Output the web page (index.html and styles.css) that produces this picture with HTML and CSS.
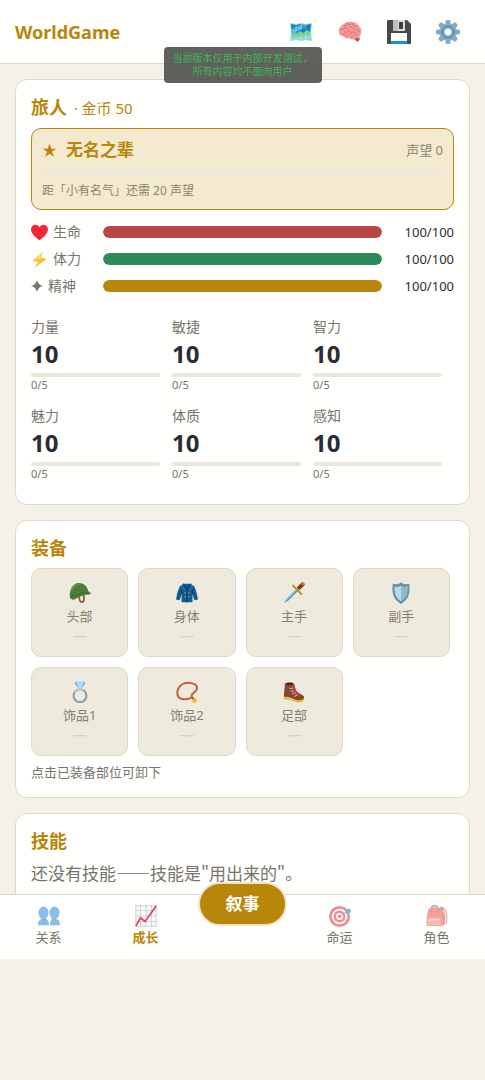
FILE: index.html
```html
<!DOCTYPE html>
<html lang="zh-CN">
<head>
    <meta charset="UTF-8">
    <meta name="viewport" content="width=device-width, initial-scale=1.0">
    <title>WorldGame</title>
    <link rel="stylesheet" href="styles.css">
</head>
<body>
    <header class="topbar">
        <h1 class="logo">WorldGame</h1>
        <div class="tools">
            <button type="button" class="tool" aria-label="地图">
                <svg viewBox="0 0 24 24">
                    <path d="M1 3l6 1 5-1 5 1 6-1-1 8 1 10-6-1-5 1-5-1-6 1 1-9z" fill="#8fd8f0"/>
                    <path d="M2 4l5 1 5-1 5 1 5-1-1 8-4-1-3 2-4-1-3 3-4-2z" fill="#1976d2"/>
                    <path d="M2 10l4-3 4-1 3-2 4 1-2 3-4 2-3 1-2 3-4-1z" fill="#4fc3f7"/>
                    <path d="M3 13l4 1 3-3 4 2 4-3 3 2v4l-4-1-3 2-4-1-3 2-4-1z" fill="#7ed17a"/>
                    <path d="M13 5l4 1-1 3-3-1zM4 6l3 1-2 3z" fill="#35a853"/>
                    <path d="M7 4v16M12 3v18M17 4v16" stroke="#fff" stroke-opacity=".35" stroke-width=".7"/>
                </svg>
            </button>
            <button type="button" class="tool" aria-label="记忆">
                <svg viewBox="0 0 24 24">
                    <path d="M15 17l5-1 2 3-2 3-3-2z" fill="#c4565f"/>
                    <path d="M1 13C0 9 2 6 5 5c2-3 6-4 9-3 3 0 5 1 6 3 3 2 4 5 3 8 0 3-2 5-5 5-2 2-5 2-7 0-3 1-5 0-6-2-2 0-4-1-4-3z" fill="#f89a9c"/>
                    <path d="M5 5c1 1 3 1 4 0M9 3c1 2 3 2 4 1M2 10c2-2 4-1 5 1M6 8c2-1 4 0 4 2M11 7c2-1 4 0 5 2M15 4c0 2 2 3 4 2M18 9c2 0 3 1 3 3M4 14c2 1 4 0 4-2M10 12c2-1 4 0 4 2M8 16c2 0 3-1 4-2M15 12c2 0 4 1 4 3M13 17c1 0 3-1 3-2" fill="none" stroke="#dc686e" stroke-width="1" stroke-linecap="round"/>
                </svg>
            </button>
            <button type="button" class="tool" aria-label="存档">
                <svg viewBox="0 0 24 24">
                    <path d="M1 0h19l4 4v19a1 1 0 0 1-1 1H1a1 1 0 0 1-1-1V1a1 1 0 0 1 1-1z" fill="#484848"/>
                    <path d="M6 0h12v11H6z" fill="#dcdcdc"/>
                    <path d="M6 0h5v11H6z" fill="#bdbdbd"/>
                    <path d="M12 2h4v7h-4z" fill="#3c3c3c"/>
                    <path d="M4 13h16v11H4z" fill="#fff"/>
                    <path d="M4 21h16v3H4z" fill="#1e90d8"/>
                </svg>
            </button>
            <button type="button" class="tool" aria-label="设置">
                <svg viewBox="0 0 24 24">
                    <g fill="#82aec0">
                        <path d="M10 0h4l1 5H9zM10 24h4l1-5H9z"/>
                        <path d="M10 0h4l1 5H9zM10 24h4l1-5H9z" transform="rotate(45 12 12)"/>
                        <path d="M10 0h4l1 5H9zM10 24h4l1-5H9z" transform="rotate(90 12 12)"/>
                        <path d="M10 0h4l1 5H9zM10 24h4l1-5H9z" transform="rotate(135 12 12)"/>
                    </g>
                    <circle cx="12" cy="12" r="6.3" fill="none" stroke="#82aec0" stroke-width="4.5"/>
                    <circle cx="12" cy="12" r="5.5" fill="none" stroke="#5c8ea5" stroke-width="2"/>
                    <circle cx="12" cy="12" r="3.6" fill="#fff" stroke="#a9c8d5" stroke-width="1.5"/>
                </svg>
            </button>
        </div>
    </header>

    <div class="notice">当前版本仅用于内部开发测试，<br>所有内容均不面向用户</div>

    <main class="content">
        <section class="card">
            <h2 class="card-title">旅人 <span class="gold-count">· 金币 50</span></h2>

            <div class="fame">
                <div class="fame-head">
                    <svg class="star" viewBox="0 0 24 24"><path d="M12 1l3 8h8l-7 5 3 8-7-5-7 5 3-8-7-5h8z" fill="#b8860b"/></svg>
                    <strong class="fame-name">无名之辈</strong>
                    <span class="fame-value">声望 0</span>
                </div>
                <div class="fame-bar"></div>
                <p class="fame-next">距「小有名气」还需 20 声望</p>
            </div>

            <div class="vitals">
                <div class="vital">
                    <span class="vital-label">
                        <svg class="vital-icon" viewBox="0 0 24 24"><path d="M12 23C5 18 0 13 0 7.5 0 3.5 3 1 6.300 1 9 1 11 2.500 12 5c1-2.500 3-4 5.700-4C21 1 24 3.500 24 7.500 24 13 19 18 12 23z" fill="#fa2530"/></svg>
                        生命
                    </span>
                    <div class="bar"><div class="bar-fill hp"></div></div>
                    <span class="vital-value">100/100</span>
                </div>
                <div class="vital">
                    <span class="vital-label">
                        <svg class="vital-icon" viewBox="0 0 24 24"><path d="M17 1L2 14l8 1-5 9 17-13-8-2z" fill="#fbc02d"/><path d="M17 1L6 11l7 1z" fill="#ffdc5c"/></svg>
                        体力
                    </span>
                    <div class="bar"><div class="bar-fill sp"></div></div>
                    <span class="vital-value">100/100</span>
                </div>
                <div class="vital">
                    <span class="vital-label">
                        <svg class="vital-icon small" viewBox="0 0 24 24"><path d="M12 0c2 7 5 10 12 12-7 2-10 5-12 12-2-7-5-10-12-12C7 10 10 7 12 0z" fill="#77746d"/></svg>
                        精神
                    </span>
                    <div class="bar"><div class="bar-fill mp"></div></div>
                    <span class="vital-value">100/100</span>
                </div>
            </div>

            <div class="attrs">
                <div class="attr"><div class="attr-name">力量</div><div class="attr-value">10</div><div class="attr-bar"></div><div class="attr-exp">0/5</div></div>
                <div class="attr"><div class="attr-name">敏捷</div><div class="attr-value">10</div><div class="attr-bar"></div><div class="attr-exp">0/5</div></div>
                <div class="attr"><div class="attr-name">智力</div><div class="attr-value">10</div><div class="attr-bar"></div><div class="attr-exp">0/5</div></div>
                <div class="attr"><div class="attr-name">魅力</div><div class="attr-value">10</div><div class="attr-bar"></div><div class="attr-exp">0/5</div></div>
                <div class="attr"><div class="attr-name">体质</div><div class="attr-value">10</div><div class="attr-bar"></div><div class="attr-exp">0/5</div></div>
                <div class="attr"><div class="attr-name">感知</div><div class="attr-value">10</div><div class="attr-bar"></div><div class="attr-exp">0/5</div></div>
            </div>
        </section>

        <section class="card">
            <h2 class="card-title">装备</h2>
            <div class="slots">
                <button type="button" class="slot">
                    <svg class="slot-icon" viewBox="0 0 24 24">
                        <path d="M11 14c0 5 1 8 3 8s3-3 2-8" fill="none" stroke="#8a5a4a" stroke-width="2"/>
                        <path d="M1 17C0 8 4 1 11 1c6 0 9 4 10 9l3 2c0 1-2 2-4 2-5 0-7 2-12 4l-2 1c-2 1-4 0-5-2z" fill="#4e7d3a"/>
                        <path d="M3 9c1-4 4-6 7-6" fill="none" stroke="#6d9b55" stroke-width="1.5" stroke-linecap="round"/>
                        <path d="M2 15c7 1 10-3 19-4" fill="none" stroke="#3a642b" stroke-width="1"/>
                    </svg>
                    <span class="slot-name">头部</span>
                    <span class="slot-item">—</span>
                </button>
                <button type="button" class="slot">
                    <svg class="slot-icon" viewBox="0 0 24 24">
                        <path d="M8 2h8l4 3c2 4 3 9 4 14l-4 1-2-7v9H6v-9l-2 7-4-1C1 14 2 9 4 5z" fill="#0f5c92"/>
                        <path d="M8 2l4 6 4-6M12 8v14M6 13V9M18 13V9" fill="none" stroke="#083c66" stroke-width="1.2"/>
                        <path d="M8 2l-2 4 4 3M16 2l2 4-4 3" fill="none" stroke="#2f80b8" stroke-width="1"/>
                        <g fill="#c9a84a"><circle cx="10" cy="12" r=".8"/><circle cx="14" cy="12" r=".8"/><circle cx="10" cy="16" r=".8"/><circle cx="14" cy="16" r=".8"/></g>
                    </svg>
                    <span class="slot-name">身体</span>
                    <span class="slot-item">—</span>
                </button>
                <button type="button" class="slot">
                    <svg class="slot-icon" viewBox="0 0 24 24">
                        <path d="M1 23l3-5L15 7l2 2L6 20z" fill="#7fc4e0"/>
                        <path d="M1 23L16 8l1 1L6 20z" fill="#4b9cc2"/>
                        <path d="M16 6l5-5 2 2-5 5z" fill="#7b3f24" stroke="#7b3f24" stroke-width="1.5"/>
                        <path d="M11 4l9 9" stroke="#c98d1d" stroke-width="2.2" stroke-linecap="round"/>
                        <circle cx="22" cy="2" r="1.8" fill="#c98d1d"/>
                    </svg>
                    <span class="slot-name">主手</span>
                    <span class="slot-item">—</span>
                </button>
                <button type="button" class="slot">
                    <svg class="slot-icon" viewBox="0 0 24 24">
                        <path d="M12 0c1 2 4 3 9 2 1 10 0 17-9 22C3 19 2 12 3 2c5 1 8 0 9-2z" fill="#6294af"/>
                        <path d="M12 4c2 1 4 2 7 1 0 8-1 12-7 16C6 17 5 13 5 5c3 1 5 0 7-1z" fill="#b9dcea"/>
                        <path d="M12 4c2 1 4 2 7 1 0 8-1 12-7 16z" fill="#93b9ca"/>
                    </svg>
                    <span class="slot-name">副手</span>
                    <span class="slot-item">—</span>
                </button>
                <button type="button" class="slot">
                    <svg class="slot-icon" viewBox="0 0 24 24">
                        <circle cx="12" cy="16" r="7" fill="none" stroke="#8e9a9b" stroke-width="2.2"/>
                        <path d="M6 12c2-3 7-4 10-2" fill="none" stroke="#d3dada" stroke-width="1.2"/>
                        <path d="M8 0h8l2 3-6 6-6-6z" fill="#75bdf0"/>
                        <path d="M8 0h8l-1 3H9zM9 3l3 6 3-6z" fill="#b9e1fb"/>
                    </svg>
                    <span class="slot-name">饰品1</span>
                    <span class="slot-item">—</span>
                </button>
                <button type="button" class="slot">
                    <svg class="slot-icon" viewBox="0 0 24 24">
                        <path d="M17 18c-5 3-13 3-15-2C0 10 4 2 13 2c6 0 10 2 10 6s-6 5-6 8c0 2 1 3 3 4" fill="none" stroke="#c8432f" stroke-width="2"/>
                        <path d="M17 18c-5 3-13 3-15-2C0 10 4 2 13 2c6 0 10 2 10 6s-6 5-6 8" fill="none" stroke="#ea8170" stroke-width="1" stroke-dasharray="1 1.5"/>
                        <path d="M17 20l5-1 1 4-4 1z" fill="#f3b81e"/>
                    </svg>
                    <span class="slot-name">饰品2</span>
                    <span class="slot-item">—</span>
                </button>
                <button type="button" class="slot">
                    <svg class="slot-icon" viewBox="0 0 24 24">
                        <path d="M1 17l8 3 6 1c4 0 7-1 8-3v3c-2 2-6 3-9 2l-5-2-8-1z" fill="#f3b41c"/>
                        <path d="M2 3c4 1 7 1 10 0l2 8c3 3 9 4 9 7 0 3-7 4-11 2l-5-2-6-1c0-5 1-9 1-14z" fill="#84492f"/>
                        <path d="M2 3c3-2 8-2 10 0-3 2-7 2-10 0z" fill="#3e2723"/>
                        <path d="M11 4l2 7 4 4" fill="none" stroke="#e22c3b" stroke-width="2.5"/>
                        <path d="M7 8l4 0M8 11l4 0M10 14l4-1M12 17l4-2" stroke="#d9c5b5" stroke-width="1"/>
                    </svg>
                    <span class="slot-name">足部</span>
                    <span class="slot-item">—</span>
                </button>
            </div>
            <p class="hint">点击已装备部位可卸下</p>
        </section>

        <section class="card">
            <h2 class="card-title">技能</h2>
            <p class="empty">还没有技能——技能是"用出来的"。</p>
        </section>
    </main>

    <nav class="tabs">
        <a href="#relation" class="tab">
            <svg class="tab-icon" viewBox="0 0 24 24">
                <path d="M0 22c0-4 1-6 5-7h2c4 1 5 3 5 7zM13 22c0-4 1-6 4-7h2c4 1 5 3 5 7z" fill="#3f93d2"/>
                <path d="M4 13h5v4H4zM15 13h5v4h-5z" fill="#3585c8"/>
                <ellipse cx="6" cy="8.5" rx="5.5" ry="6.8" fill="#3f93e2"/>
                <ellipse cx="18" cy="8.5" rx="5.5" ry="6.8" fill="#3f93e2"/>
            </svg>
            <span>关系</span>
        </a>
        <a href="#growth" class="tab active">
            <svg class="tab-icon" viewBox="0 0 24 24">
                <path d="M0 0h24v24H0z" fill="#fafafa"/>
                <path d="M1 0v24M6 0v24M12 0v24M18 0v24M23 0v24M0 1h24M0 6h24M0 12h24M0 18h24M0 23h24" stroke="#b3bdc0" stroke-width=".8"/>
                <path d="M1 23l5-9 5 4L23 1" fill="none" stroke="#d8213a" stroke-width="1.8"/>
            </svg>
            <span>成长</span>
        </a>
        <a href="#story" class="story">叙事</a>
        <a href="#fate" class="tab">
            <svg class="tab-icon" viewBox="0 0 24 24">
                <circle cx="11.5" cy="12.5" r="11.5" fill="#e2434e"/>
                <circle cx="11.5" cy="12.5" r="8.5" fill="#fff"/>
                <circle cx="11.5" cy="12.5" r="6.5" fill="#e2434e"/>
                <circle cx="11.5" cy="12.5" r="3.8" fill="#fff"/>
                <circle cx="11.5" cy="12.5" r="2" fill="#e2434e"/>
                <path d="M12 12l8-5" stroke="#777" stroke-width="1"/>
                <path d="M18 5l5-1 1 3-3 3-3-1z" fill="#1d88d0"/>
            </svg>
            <span>命运</span>
        </a>
        <a href="#role" class="tab">
            <svg class="tab-icon" viewBox="0 0 24 24">
                <path d="M15 2c6-1 9 6 8 17l-5 4z" fill="#c9605c"/>
                <path d="M19 5c2 3 3 9 2 15" fill="none" stroke="#f9dcd8" stroke-width="1.5"/>
                <path d="M6 3c0-3 7-3 7 0" fill="none" stroke="#5f7180" stroke-width="1.5"/>
                <path d="M3 4c3-2 11-2 14 0 2 5 2 12 1 19H1C0 16 1 9 3 4z" fill="#f2625a"/>
                <path d="M2 14h14v8H2z" fill="#f78a80"/>
                <path d="M3 16h12" stroke="#ffd0cb" stroke-width="1.5"/>
                <path d="M6 4v4M14 4v4" stroke="#5f7180" stroke-width="1.2"/>
            </svg>
            <span>角色</span>
        </a>
    </nav>
</body>
</html>
```

FILE: styles.css
```css
* {
    margin: 0;
    padding: 0;
    box-sizing: border-box;
}

body {
    height: 100vh;
    display: flex;
    flex-direction: column;
    padding-bottom: 121px;
    background: #f4f1e8;
    color: #2a2d34;
    font-family: 'Noto Sans', 'Noto Sans CJK SC', sans-serif;
    font-size: 14px;
    line-height: 20px;
    overflow: hidden;
}

button {
    font: inherit;
    color: inherit;
    cursor: pointer;
}

a {
    color: inherit;
    text-decoration: none;
}

svg {
    display: block;
    flex-shrink: 0;
}

/* 顶部 */
.topbar {
    display: flex;
    justify-content: space-between;
    align-items: center;
    height: 64px;
    flex-shrink: 0;
    padding: 0 25px 0 15px;
    background: #fffffd;
    border-bottom: 1px solid #e0d9c8;
}

.logo {
    font-size: 18px;
    line-height: 24px;
    color: #b8860b;
}

.tools {
    display: flex;
    gap: 25px;
}

.tool {
    width: 24px;
    height: 24px;
    border: none;
    background: none;
}

.notice {
    position: fixed;
    top: 47px;
    left: 50%;
    transform: translateX(-50%);
    z-index: 10;
    padding: 5px 9px;
    border-radius: 4px;
    background: rgba(75, 75, 73, 0.88);
    color: #3fb950;
    font-size: 10px;
    line-height: 13px;
    text-align: center;
    white-space: nowrap;
}

/* 内容 */
.content {
    flex: 1;
    min-height: 0;
    display: flex;
    flex-direction: column;
    gap: 15px;
    padding: 15px;
    overflow-y: auto;
    scrollbar-width: none;
}

.card {
    flex-shrink: 0;
    padding: 15px;
    background: #fffffd;
    border: 1px solid #e0d9c8;
    border-radius: 12px;
}

.card-title {
    margin-bottom: 8px;
    font-size: 18px;
    line-height: 24px;
    color: #b8860b;
}

.gold-count {
    margin-left: 2px;
    font-size: 15px;
    font-weight: 400;
}

.fame {
    padding: 9px 10px;
    background: #f4ead0;
    border: 1px solid #b8860b;
    border-radius: 10px;
}

.fame-head {
    display: flex;
    align-items: center;
    gap: 9px;
    line-height: 24px;
}

.star {
    width: 15px;
    height: 15px;
}

.fame-name {
    flex: 1;
    font-size: 17px;
    color: #b8860b;
}

.fame-value {
    font-size: 13px;
    color: #8b8470;
}

.fame-bar {
    height: 8px;
    margin: 6px 0;
    border-radius: 4px;
    background: #f0e9d7;
}

.fame-next {
    font-size: 12px;
    line-height: 18px;
    color: #8b8470;
}

.vitals {
    display: flex;
    flex-direction: column;
    gap: 7px;
    margin-top: 12px;
}

.vital {
    display: flex;
    align-items: center;
}

.vital-label {
    display: flex;
    align-items: center;
    gap: 5px;
    width: 72px;
    color: #77746d;
}

.vital-icon {
    width: 17px;
    height: 17px;
}

.vital-icon.small {
    width: 12px;
    height: 12px;
}

.bar {
    flex: 1;
    height: 12px;
    border-radius: 6px;
    background: #eeeadd;
    overflow: hidden;
}

.bar-fill {
    width: 100%;
    height: 100%;
    border-radius: 6px;
}

.hp {
    background: #b94743;
}

.sp {
    background: #2e8b57;
}

.mp {
    background: #b8860b;
}

.vital-value {
    width: 72px;
    font-size: 13px;
    text-align: right;
}

.attrs {
    display: grid;
    grid-template-columns: repeat(3, 1fr);
    row-gap: 14px;
    margin: 21px 0 8px;
}

.attr {
    padding-right: 12px;
}

.attr-name {
    color: #77746d;
}

.attr-value {
    font-size: 24px;
    font-weight: 700;
    line-height: 34px;
}

.attr-bar {
    height: 4px;
    margin: 2px 0 1px;
    border-radius: 2px;
    background: #ebe7da;
}

.attr-exp {
    font-size: 11px;
    line-height: 14px;
    color: #77746d;
}

/* 装备 */
.slots {
    display: grid;
    grid-template-columns: repeat(4, 1fr);
    gap: 10px;
    padding-right: 4px;
}

.slot {
    display: flex;
    flex-direction: column;
    align-items: center;
    height: 89px;
    padding-top: 13px;
    background: #eeeadd;
    border: 1px solid #dfd8c7;
    border-radius: 10px;
}

.slot-icon {
    width: 22px;
    height: 22px;
    margin-bottom: 2px;
}

.slot-name {
    font-size: 13px;
    color: #85816f;
}

.slot-item {
    color: #d6d1c3;
}

.hint {
    margin-top: 6px;
    font-size: 13px;
    color: #77746d;
}

.empty {
    margin-bottom: 12px;
    font-family: 'Noto Sans CJK SC', sans-serif;
    font-size: 17px;
    line-height: 24px;
    color: #77746d;
}

/* 底部导航 */
.tabs {
    position: relative;
    display: grid;
    grid-template-columns: repeat(5, 1fr);
    flex-shrink: 0;
    height: 65px;
    background: #fffffd;
    border-top: 1px solid #e0d9c8;
}

.tab {
    display: flex;
    flex-direction: column;
    align-items: center;
    padding-top: 10px;
    font-size: 13px;
    color: #77746d;
}

.tab-icon {
    width: 22px;
    height: 22px;
    opacity: 0.6;
}

.tab.active {
    color: #b8860b;
    font-weight: 700;
}

.tab.active .tab-icon {
    opacity: 0.85;
}

.story {
    justify-self: center;
    width: 89px;
    height: 44px;
    margin-top: -13px;
    border: 2px solid #f0e4c4;
    border-radius: 22px;
    background: #b8860b;
    color: #fffffd;
    font-size: 17px;
    font-weight: 700;
    line-height: 40px;
    text-align: center;
}
```
